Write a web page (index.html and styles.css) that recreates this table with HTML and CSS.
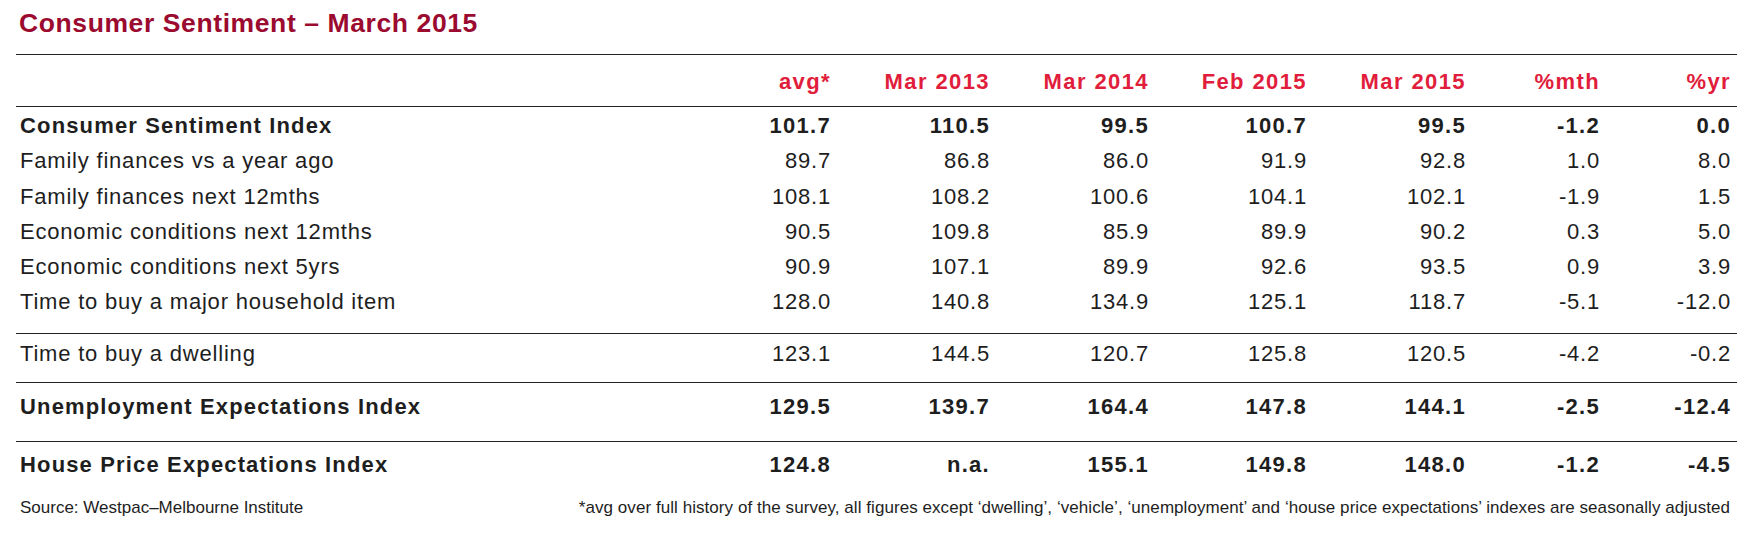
FILE: index.html
```html
<!DOCTYPE html>
<html lang="en">
<head>
<meta charset="utf-8">
<title>Consumer Sentiment – March 2015</title>
<link rel="stylesheet" href="styles.css">
</head>
<body>
<div class="page">
  <h1 class="title">Consumer Sentiment – March 2015</h1>
  <table class="sentiment">
    <colgroup>
      <col class="c-label"><col class="c-date"><col class="c-date"><col class="c-date"><col class="c-date2"><col class="c-date"><col class="c-mth"><col class="c-yr">
    </colgroup>
    <thead>
      <tr>
        <th class="lbl"></th>
        <th>avg*</th><th>Mar 2013</th><th>Mar 2014</th><th>Feb 2015</th><th>Mar 2015</th><th>%mth</th><th class="last">%yr</th>
      </tr>
    </thead>
    <tbody>
      <tr class="bold first">
        <td class="lbl">Consumer Sentiment Index</td>
        <td>101.7</td><td>110.5</td><td>99.5</td><td>100.7</td><td>99.5</td><td>-1.2</td><td class="last">0.0</td>
      </tr>
      <tr>
        <td class="lbl">Family finances vs a year ago</td>
        <td>89.7</td><td>86.8</td><td>86.0</td><td>91.9</td><td>92.8</td><td>1.0</td><td class="last">8.0</td>
      </tr>
      <tr>
        <td class="lbl">Family finances next 12mths</td>
        <td>108.1</td><td>108.2</td><td>100.6</td><td>104.1</td><td>102.1</td><td>-1.9</td><td class="last">1.5</td>
      </tr>
      <tr>
        <td class="lbl">Economic conditions next 12mths</td>
        <td>90.5</td><td>109.8</td><td>85.9</td><td>89.9</td><td>90.2</td><td>0.3</td><td class="last">5.0</td>
      </tr>
      <tr>
        <td class="lbl">Economic conditions next 5yrs</td>
        <td>90.9</td><td>107.1</td><td>89.9</td><td>92.6</td><td>93.5</td><td>0.9</td><td class="last">3.9</td>
      </tr>
      <tr class="group-end">
        <td class="lbl">Time to buy a major household item</td>
        <td>128.0</td><td>140.8</td><td>134.9</td><td>125.1</td><td>118.7</td><td>-5.1</td><td class="last">-12.0</td>
      </tr>
      <tr class="dwelling">
        <td class="lbl">Time to buy a dwelling</td>
        <td>123.1</td><td>144.5</td><td>120.7</td><td>125.8</td><td>120.5</td><td>-4.2</td><td class="last">-0.2</td>
      </tr>
      <tr class="bold unemp">
        <td class="lbl">Unemployment Expectations Index</td>
        <td>129.5</td><td>139.7</td><td>164.4</td><td>147.8</td><td>144.1</td><td>-2.5</td><td class="last">-12.4</td>
      </tr>
      <tr class="bold house">
        <td class="lbl">House Price Expectations Index</td>
        <td>124.8</td><td>n.a.</td><td>155.1</td><td>149.8</td><td>148.0</td><td>-1.2</td><td class="last">-4.5</td>
      </tr>
    </tbody>
  </table>
  <div class="footer">
    <span>Source: Westpac–Melbourne Institute</span>
    <span class="note">*avg over full history of the survey, all figures except ‘dwelling’, ‘vehicle’, ‘unemployment’ and ‘house price expectations’ indexes are seasonally adjusted</span>
  </div>
</div>
</body>
</html>
```

FILE: styles.css
```css
html, body {
  margin: 0;
  padding: 0;
  background: #ffffff;
}

body {
  font-family: "Liberation Sans", Arial, sans-serif;
  color: #1e1e1e;
}

.page {
  width: 1743px;
}

.title {
  margin: 0;
  padding: 7px 0 0 19px;
  font-size: 26.5px;
  line-height: 32px;
  font-weight: bold;
  letter-spacing: 0.6px;
  color: #9b0a2f;
}

.sentiment {
  margin: 15px 0 0 16px;
  width: 1721px;
  border-collapse: separate;
  border-spacing: 0;
  table-layout: fixed;
  font-size: 22px;
}

.c-label { width: 656px; }
.c-date { width: 159px; }
.c-date2 { width: 158px; }
.c-mth { width: 134px; }
.c-yr { width: 137px; }

.sentiment th {
  font-weight: bold;
  color: #e11d3c;
  text-align: right;
  line-height: 24px;
  padding: 15px 0 12px 0;
  border-top: 1px solid #222;
  border-bottom: 1px solid #222;
  letter-spacing: 1.4px;
  white-space: nowrap;
}

.sentiment td {
  text-align: right;
  line-height: 35.3px;
  padding: 0;
  letter-spacing: 0.8px;
  white-space: nowrap;
}

.sentiment .lbl {
  text-align: left;
  padding-left: 4px;
}

.sentiment .last {
  padding-right: 6px;
}

.sentiment tr.bold td {
  font-weight: bold;
  letter-spacing: 1.3px;
}

.sentiment tr.bold td.lbl {
  letter-spacing: 1.15px;
}

.sentiment tr.first td {
  padding-top: 1px;
}

.sentiment tr.group-end td {
  padding-bottom: 13px;
}

.sentiment tr.dwelling td {
  border-top: 1px solid #222;
  padding-top: 2px;
  padding-bottom: 10.7px;
}

.sentiment tr.unemp td {
  border-top: 1px solid #222;
  padding-top: 6.7px;
  padding-bottom: 16px;
}

.sentiment tr.house td {
  border-top: 1px solid #222;
  padding-top: 5.7px;
}

.footer {
  display: flex;
  justify-content: space-between;
  margin-top: 15px;
  padding: 0 13px 0 20px;
  font-size: 17px;
  line-height: 20px;
  color: #1e1e1e;
}

.footer .note {
  letter-spacing: 0.06px;
}
```
